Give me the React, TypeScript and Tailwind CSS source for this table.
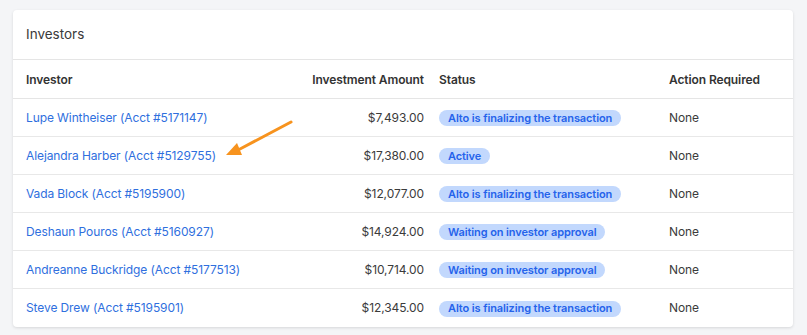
import React from 'react';

interface Investor {
  name: string;
  acct: string;
  amount: string;
  status: string;
  action: string;
}

const investors: Investor[] = [
  { name: 'Lupe Wintheiser', acct: '5171147', amount: '$7,493.00', status: 'Alto is finalizing the transaction', action: 'None' },
  { name: 'Alejandra Harber', acct: '5129755', amount: '$17,380.00', status: 'Active', action: 'None' },
  { name: 'Vada Block', acct: '5195900', amount: '$12,077.00', status: 'Alto is finalizing the transaction', action: 'None' },
  { name: 'Deshaun Pouros', acct: '5160927', amount: '$14,924.00', status: 'Waiting on investor approval', action: 'None' },
  { name: 'Andreanne Buckridge', acct: '5177513', amount: '$10,714.00', status: 'Waiting on investor approval', action: 'None' },
  { name: 'Steve Drew', acct: '5195901', amount: '$12,345.00', status: 'Alto is finalizing the transaction', action: 'None' },
];

const rowGrid = 'grid grid-cols-[274px_124px_245px_1fr] items-center pl-[13px]';

const StatusBadge: React.FC<{ label: string }> = ({ label }) => (
  <span className="inline-flex items-center h-[16px] px-[9px] rounded-full bg-[#c2d8fd] text-[#2563eb] text-[11px] tracking-[-0.1px] font-semibold leading-none">
    {label}
  </span>
);

const App: React.FC = () => {
  return (
    <div
      className="relative w-[807px] h-[335px] bg-[#f4f5f7] pt-[10px] pl-[13px] text-[#3b3b3b] text-[12px] tracking-[-0.1px]"
      style={{ fontFamily: 'Inter, "Noto Sans", sans-serif' }}
    >
      <div className="w-[780px] bg-white rounded-[4px] shadow-[0_1px_3px_rgba(0,0,0,0.12)] overflow-hidden">
        <div className="h-[50px] flex items-center px-[13px] border-b border-[#e5e5e5]">
          <h2 className="text-[13.5px] tracking-normal text-[#3a3a3a] font-normal">Investors</h2>
        </div>

        <div className={`${rowGrid} h-[39px] pt-[1px] border-b border-[#e5e5e5] font-semibold text-[#333]`}>
          <div>Investor</div>
          <div className="text-right">Investment Amount</div>
          <div className="pl-[15px]">Status</div>
          <div>Action Required</div>
        </div>

        {investors.map((inv, i) => (
          <div
            key={inv.acct}
            className={`${rowGrid} h-[38px] ${i < investors.length - 1 ? 'border-b border-[#e8e8e8]' : ''}`}
          >
            <div>
              <a href="#" className="text-[#2f6fde]">
                {inv.name} (Acct #{inv.acct})
              </a>
            </div>
            <div className="text-right">{inv.amount}</div>
            <div className="pl-[15px]">
              <StatusBadge label={inv.status} />
            </div>
            <div>{inv.action}</div>
          </div>
        ))}
      </div>

      {/* annotation arrow */}
      <svg className="absolute left-[220px] top-[115px]" width="80" height="50" viewBox="0 0 80 50">
        <line x1="71" y1="7" x2="20" y2="34" stroke="#f7931e" strokeWidth="3" strokeLinecap="round" />
        <polygon points="6,40 17,28 22,40" fill="#f7931e" />
      </svg>
    </div>
  );
};

export default App;
